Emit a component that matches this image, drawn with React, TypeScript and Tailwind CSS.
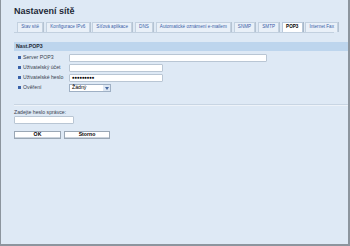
const tabs = [
  "Stav sítě",
  "Konfigurace IPv6",
  "Síťová aplikace",
  "DNS",
  "Automatické oznámení e-mailem",
  "SNMP",
  "SMTP",
  "POP3",
  "Internet Fax",
];

function Bullet() {
  return <span className="inline-block w-[3px] h-[3px] bg-[#3a62a8] mr-[2px]" />;
}

export default function App() {
  return (
    <div
      className="w-[350px] h-[246px] bg-[#dee9f5] border-l border-r-2 border-b-2 border-[#8c959e] overflow-hidden"
      style={{ fontFamily: '"Liberation Sans", Arial, sans-serif' }}
    >
      <div className="pl-[13px] pt-[6px]">
        <h1 className="text-[9px] font-bold text-[#1e2a38] leading-[10px]">Nastavení sítě</h1>
      </div>

      {/* tabs */}
      <div className="ml-[13px] mr-[14px] mt-[6px] flex gap-[2.5px] pl-[3px] border-b border-[#c2d0df]">
        {tabs.map((t) => (
          <div
            key={t}
            className={
              t === "POP3"
                ? "shrink-0 whitespace-nowrap h-[10px] px-[3.3px] flex items-center text-[4.6px] font-bold text-black bg-white border border-b-0 border-[#b8c8da] shadow-[1px_0_0_#a9b8c8]"
                : "shrink-0 whitespace-nowrap h-[10px] px-[3.3px] flex items-center text-[4.6px] text-[#3a5fa8] bg-[#e9f0f8] border border-b-0 border-[#c3d1e0] shadow-[1px_0_0_#b5c3d2]"
            }
          >
            {t}
          </div>
        ))}
      </div>

      {/* section */}
      <div className="ml-[13px] mt-[9px] h-[9px] bg-[#bdd5ed] flex items-center pl-[2px]">
        <span className="text-[5.2px] font-bold text-[#1e2a38]">Nast.POP3</span>
      </div>

      <div className="ml-[17px] mt-[3px] flex flex-col gap-[2px] text-[5.2px] text-[#3a4350]">
        <div className="flex items-center h-[8px]">
          <div className="w-[51px] flex items-center whitespace-nowrap"><Bullet />Server POP3</div>
          <div className="w-[198px] h-[8px] bg-white border border-[#b9c6d4] rounded-[1px]" />
        </div>
        <div className="flex items-center h-[8px]">
          <div className="w-[51px] flex items-center whitespace-nowrap"><Bullet />Uživatelský účet</div>
          <div className="w-[94px] h-[8px] bg-white border border-[#b9c6d4] rounded-[1px]" />
        </div>
        <div className="flex items-center h-[8px]">
          <div className="w-[51px] flex items-center whitespace-nowrap"><Bullet />Uživatelské heslo</div>
          <div className="w-[94px] h-[8px] bg-white border border-[#b9c6d4] rounded-[1px] flex items-center pl-[2px] text-[4.6px] tracking-[-0.3px] text-black">●●●●●●●●●</div>
        </div>
        <div className="flex items-center h-[8px]">
          <div className="w-[51px] flex items-center whitespace-nowrap"><Bullet />Ověření</div>
          <div className="w-[42px] h-[8px] bg-white border border-[#9fb0c4] flex items-center justify-between pl-[2px] text-black">
            <span>Žádný</span>
            <span className="w-[7px] h-full bg-[#dde7f3] flex items-center justify-center">
              <svg width="4" height="3" viewBox="0 0 4 3"><path d="M0 0h4L2 3z" fill="#4a6aa0" /></svg>
            </span>
          </div>
        </div>
      </div>

      <div className="ml-[13px] mt-[12px] h-[1px] bg-[#c8d5e3] shadow-[0_1px_0_#eef3f9]" />

      <div className="ml-[13px] mt-[4px] text-[5.2px] text-[#3a4350] leading-[6px]">Zadejte heslo správce:</div>
      <div className="ml-[13px] mt-[1px] w-[60px] h-[8px] bg-white border border-[#b9c6d4] rounded-[1px]" />

      <div className="ml-[13px] mt-[7px] flex gap-[3px]">
        <button className="w-[47px] h-[8px] bg-white border border-[#9aa7b5] text-[5.2px] font-bold text-black leading-none flex items-center justify-center shadow-[inset_0_-1px_0_#c9d2dc]">OK</button>
        <button className="w-[46px] h-[8px] bg-white border border-[#9aa7b5] text-[5.2px] font-bold text-black leading-none flex items-center justify-center shadow-[inset_0_-1px_0_#c9d2dc]">Storno</button>
      </div>
    </div>
  );
}
